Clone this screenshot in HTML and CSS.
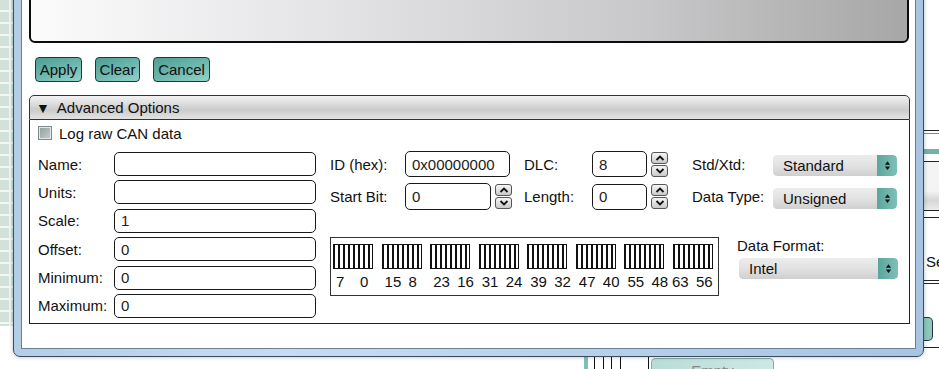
FILE: index.html
```html
<!DOCTYPE html>
<html>
<head>
<meta charset="utf-8">
<link rel="stylesheet" href="styles.css">
</head>
<body>
<div class="desk">
  <div class="grid-strip"></div>
  <div class="right-app">
    <div class="ra-line l1"></div>
    <div class="ra-line l2"></div>
    <div class="ra-teal"></div>
    <div class="ra-line l3"></div>
    <div class="ra-gray"></div>
    <div class="ra-line l4"></div>
    <div class="ra-line l5"></div>
    <div class="ra-text">Se</div>
    <div class="ra-line l6"></div>
    <div class="ra-line l7"></div>
    <div class="ra-btn"></div>
    <div class="ra-line l8"></div>
  </div>
  <div class="bottom-app">
    <div class="ba-teal"></div>
    <div class="ba-vl v1"></div>
    <div class="ba-vl v2"></div>
    <div class="ba-vl v3"></div>
    <div class="ba-vl v4"></div>
    <div class="ba-vl v5"></div>
    <div class="ba-empty">Empty</div>
  </div>
</div>

<div class="window">
  <div class="client">
    <div class="textarea"></div>
    <div class="btnrow">
      <button class="tbtn b-apply">Apply</button>
      <button class="tbtn b-clear">Clear</button>
      <button class="tbtn b-cancel">Cancel</button>
    </div>
    <div class="panel">
      <div class="panel-head"><span class="tri">&#9660;</span>Advanced Options</div>
      <div class="panel-body">
        <div class="chk"><span class="box"></span>Log raw CAN data</div>
        <div class="form">
          <div class="col1">
            <span class="lbl">Name:</span><div class="inp"></div>
            <span class="lbl">Units:</span><div class="inp"></div>
            <span class="lbl">Scale:</span><div class="inp">1</div>
            <span class="lbl">Offset:</span><div class="inp">0</div>
            <span class="lbl">Minimum:</span><div class="inp">0</div>
            <span class="lbl">Maximum:</span><div class="inp">0</div>
          </div>
          <div class="col2">
            <div class="rows">
              <span class="lbl">ID (hex):</span>
              <div class="field"><div class="inp w-id">0x00000000</div></div>
              <span class="lbl">DLC:</span>
              <div class="field"><div class="inp w-sm">8</div><div class="spin"><span class="sb"><svg viewBox="0 0 10 6" class="chev"><path d="M1.5 5 L5 1.5 L8.5 5"/></svg></span><span class="sb"><svg viewBox="0 0 10 6" class="chev"><path d="M1.5 1 L5 4.5 L8.5 1"/></svg></span></div></div>
              <span class="lbl">Std/Xtd:</span>
              <div class="sel"><span class="sv">Standard</span><span class="sa"><svg viewBox="0 0 8 12"><path d="M4 1 L7 5 L1 5 Z M4 11 L7 7 L1 7 Z"/></svg></span></div>

              <span class="lbl">Start Bit:</span>
              <div class="field"><div class="inp w-sb">0</div><div class="spin"><span class="sb"><svg viewBox="0 0 10 6" class="chev"><path d="M1.5 5 L5 1.5 L8.5 5"/></svg></span><span class="sb"><svg viewBox="0 0 10 6" class="chev"><path d="M1.5 1 L5 4.5 L8.5 1"/></svg></span></div></div>
              <span class="lbl">Length:</span>
              <div class="field"><div class="inp w-sm">0</div><div class="spin"><span class="sb"><svg viewBox="0 0 10 6" class="chev"><path d="M1.5 5 L5 1.5 L8.5 5"/></svg></span><span class="sb"><svg viewBox="0 0 10 6" class="chev"><path d="M1.5 1 L5 4.5 L8.5 1"/></svg></span></div></div>
              <span class="lbl">Data Type:</span>
              <div class="sel"><span class="sv">Unsigned</span><span class="sa"><svg viewBox="0 0 8 12"><path d="M4 1 L7 5 L1 5 Z M4 11 L7 7 L1 7 Z"/></svg></span></div>
            </div>
            <div class="bottom">
              <div class="bits">
                <div class="grp"><div class="bar"></div><div class="nums"><span>7</span><span>0</span></div></div>
                <div class="grp"><div class="bar"></div><div class="nums"><span>15</span><span>8</span></div></div>
                <div class="grp"><div class="bar"></div><div class="nums"><span>23</span><span>16</span></div></div>
                <div class="grp"><div class="bar"></div><div class="nums"><span>31</span><span>24</span></div></div>
                <div class="grp"><div class="bar"></div><div class="nums"><span>39</span><span>32</span></div></div>
                <div class="grp"><div class="bar"></div><div class="nums"><span>47</span><span>40</span></div></div>
                <div class="grp"><div class="bar"></div><div class="nums"><span>55</span><span>48</span></div></div>
                <div class="grp"><div class="bar"></div><div class="nums last"><span>63</span><span>56</span></div></div>
              </div>
              <div class="fmt">
                <span class="lbl">Data Format:</span>
                <div class="sel wide"><span class="sv">Intel</span><span class="sa"><svg viewBox="0 0 8 12"><path d="M4 1 L7 5 L1 5 Z M4 11 L7 7 L1 7 Z"/></svg></span></div>
              </div>
            </div>
          </div>
        </div>
      </div>
    </div>
  </div>
</div>
</body>
</html>
```

FILE: styles.css
```css
* { box-sizing: border-box; }
html, body {
  margin: 0;
  padding: 0;
  width: 939px;
  height: 369px;
  overflow: hidden;
  background: #fff;
  font-family: "Liberation Sans", Arial, sans-serif;
  font-size: 15px;
  color: #111;
}
.desk { position: absolute; inset: 0; }
.grid-strip {
  position: absolute;
  left: 0; top: 0;
  width: 13px; height: 326px;
  background-color: #d2e2d8;
  background-image:
    repeating-linear-gradient(180deg, transparent 0 10px, #f4f8f5 10px 12px),
    linear-gradient(90deg, transparent 0 9px, #f4f8f5 9px 11px, transparent 11px);
}
.right-app { position: absolute; left: 924px; top: 0; width: 15px; height: 369px; }
.ra-line { position: absolute; left: 0; right: 0; height: 1px; background: #222; }
.l1 { top: 130px; } .l2 { top: 133px; background: #888; }
.ra-teal { position: absolute; left: 0; right: 0; top: 149px; height: 5px; background: #6fb3a9; }
.l3 { top: 161px; }
.ra-gray { position: absolute; left: 0; right: 0; top: 162px; height: 48px; background: linear-gradient(#f4f4f4, #f4f4f4 60%, #d6d6d6 80%, #ececec); }
.l4 { top: 210px; } .l5 { top: 217px; }
.ra-text { position: absolute; left: 2px; top: 253px; font-size: 15px; }
.l6 { top: 280px; } .l7 { top: 283px; }
.ra-btn { position: absolute; left: 0; width: 9px; top: 317px; height: 24px; background: #8dc7bd; border: 1px solid #234; border-left: none; border-radius: 0 5px 5px 0; }
.l8 { top: 347px; }
.bottom-app { position: absolute; left: 0; top: 357px; width: 939px; height: 12px; }
.ba-teal { position: absolute; left: 584px; top: 0; width: 4px; height: 12px; background: #7ec0b6; }
.ba-vl { position: absolute; top: 0; width: 1px; height: 12px; background: #111; }
.v1 { left: 594px; } .v2 { left: 603px; } .v3 { left: 611px; } .v4 { left: 620px; } .v5 { left: 648px; }
.ba-empty {
  position: absolute; left: 651px; top: 1px; width: 123px; height: 20px;
  background: linear-gradient(90deg, #b9ddd6, #cfe8e3);
  border: 1px solid #8aa; border-radius: 4px;
  color: #888; text-align: center; padding-top: 3px; font-size: 15px;
}

.window {
  position: absolute;
  left: 13px; top: -30px;
  width: 911px; height: 387px;
  border: 1px solid #3c4c5e;
  border-radius: 0 0 7px 7px;
  padding: 7px;
  background: linear-gradient(90deg, #b4cde6 0%, #c6dcf0 30%, #b9d2ea 60%, #a9c4e0 100%);
  box-shadow: 0 0 4px rgba(40,60,80,0.35);
}
.client {
  width: 100%; height: 100%;
  background: #fff;
  border: 1px solid #6a7f96;
  padding: 0 0 0 6px;
  display: flex; flex-direction: column;
}
.textarea {
  margin-top: 4px;
  margin-left: 1px;
  width: 880px; height: 60px;
  border: 2px solid #0c0c0c;
  border-radius: 0 0 6px 6px;
  background: linear-gradient(90deg, #fbfbfb 0%, #e3e3e6 35%, #c8c8ca 70%, #a7a7a7 100%);
}
.btnrow { display: flex; margin-top: 14px; margin-left: 7px; height: 25px; }
.tbtn {
  height: 25px;
  font-family: "Liberation Sans", Arial, sans-serif;
  font-size: 15px; color: #111;
  border: 1px solid #1e3a36; border-radius: 4px;
  background: linear-gradient(160deg, #4f9d94 0%, #6cb6ad 50%, #93d2ca 100%);
  padding: 0 2px;
  display: flex; align-items: center; justify-content: center;
}
.b-apply { width: 47px; }
.b-clear { width: 45px; margin-left: 13px; }
.b-cancel { width: 57px; margin-left: 13px; }

.panel { margin-top: 13px; margin-left: 1px; width: 881px; }
.panel-head {
  height: 25px;
  border: 1px solid #333;
  border-radius: 5px 5px 0 0;
  background: linear-gradient(#f2f2f2 0%, #dcdcdc 35%, #cbcbcb 60%, #e3e3e3 100%);
  display: flex; align-items: center;
  padding-left: 6px;
  font-size: 15px; color: #111;
}
.tri { font-size: 14px; margin-right: 7px; }
.panel-body {
  border: 1px solid #222; border-top: none;
  height: 204px;
  padding: 6px 0 0 8px;
}
.chk { display: flex; align-items: center; height: 14px; }
.box {
  width: 14px; height: 14px; margin-right: 7px;
  border: 1px solid #7f8a8a;
  background: linear-gradient(135deg, #8f9c9b, #c9d0cf);
  box-shadow: inset 0 0 0 1px #e4e8e8;
}
.form { display: flex; margin-top: 11px; align-items: flex-start; }
.col1 {
  margin-top: 1px;
  display: grid;
  grid-template-columns: 76px 202px;
  grid-auto-rows: 24px;
  row-gap: 4.4px;
  align-items: center;
}
.lbl { font-size: 15px; color: #111; white-space: nowrap; }
.inp {
  height: 24px;
  border: 1px solid #1a1a1a;
  border-radius: 5px;
  background: #fff;
  padding-left: 6px;
  display: flex; align-items: center;
  font-size: 15px; color: #222;
}
.col2 { margin-left: 14px; }
.rows {
  display: grid;
  grid-template-columns: 75px 119px 68px 100px 81px 124px;
  grid-template-rows: 26px 27px;
  row-gap: 6px;
  align-items: center;
}
.field { display: flex; align-items: center; }
.w-id { width: 105px; height: 26px; }
.w-sm { width: 55px; height: 26px; }
.w-sb { width: 86px; height: 27px; }
.spin { display: flex; flex-direction: column; gap: 1px; margin-left: 4px; }
.sb {
  width: 17px; height: 12px;
  border: 1px solid #555; border-radius: 3px;
  background: linear-gradient(#f6f6f6, #c9c9c9);
  display: flex; align-items: center; justify-content: center;
}
.chev { width: 10px; height: 6px; fill: none; stroke: #111; stroke-width: 1.8; }
.sel {
  height: 21px; width: 124px;
  display: flex;
  border-radius: 4px;
  overflow: hidden;
}
.rows .sel { margin-top: 3px; }
.sv {
  flex: 1;
  background: linear-gradient(#ececec 0%, #e2e2e2 50%, #cfcfcf 100%);
  padding-left: 10px;
  display: flex; align-items: center;
  font-size: 15px; color: #111;
  border-radius: 4px 0 0 4px;
}
.sa {
  width: 20px;
  background: linear-gradient(90deg, #5aa59c, #7fc0b7);
  display: flex; align-items: center; justify-content: center;
  border-radius: 0 4px 4px 0;
}
.sa svg { width: 7px; height: 11px; fill: #111; }
.bottom { display: flex; margin-top: 27px; align-items: flex-start; }
.bits {
  width: 389px; height: 59px;
  border: 1px solid #333;
  display: flex; justify-content: space-between;
  padding: 6px 5px 0 2px;
}
.grp { width: 40px; display: flex; flex-direction: column; align-items: flex-start; }
.bar {
  width: 40px; height: 25px;
  border: 1px solid #111;
  border-left-width: 2px;
  background: repeating-linear-gradient(90deg, #fff 0 3px, #111 3px 5px);
}
.nums {
  display: flex;
  font-size: 15px; margin-top: 4px; padding-left: 3px;
  white-space: nowrap;
}
.nums span:first-child { width: 24px; }
.nums.last { margin-left: -4px; }
.fmt { margin-left: 18px; display: flex; flex-direction: column; padding-top: 0; }
.sel.wide { width: 159px; margin-left: 2px; margin-top: 4px; }
```
